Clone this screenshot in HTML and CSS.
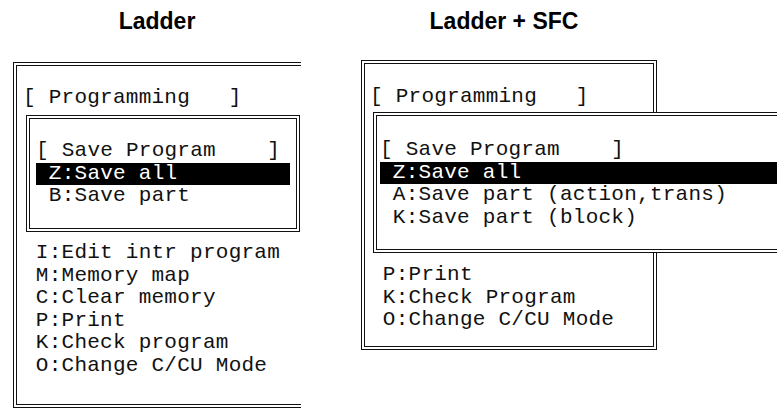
FILE: index.html
```html
<!DOCTYPE html>
<html lang="en">

<head>
    <meta charset="UTF-8">
    <meta name="viewport" content="width=device-width, initial-scale=1.0">
    <title>Programming - Save Program</title>
    <link rel="stylesheet" href="styles.css">
</head>

<body>
    <main class="page">
        <section class="col col-ladder">
            <h2 class="title">Ladder</h2>
            <div class="screen">
                <div class="frame">
                    <div class="line">[ Programming   ]</div>
                    <div class="popup">
                        <div class="line">[ Save Program    ]</div>
                        <div class="line sel"> Z:Save all</div>
                        <div class="line"> B:Save part</div>
                    </div>
                    <div class="line"> I:Edit intr program</div>
                    <div class="line"> M:Memory map</div>
                    <div class="line"> C:Clear memory</div>
                    <div class="line"> P:Print</div>
                    <div class="line"> K:Check program</div>
                    <div class="line"> O:Change C/CU Mode</div>
                </div>
            </div>
        </section>

        <section class="col col-sfc">
            <h2 class="title">Ladder + SFC</h2>
            <div class="screen">
                <div class="frame">
                    <div class="line">[ Programming   ]</div>
                    <div class="popup">
                        <div class="line">[ Save Program    ]</div>
                        <div class="line sel"> Z:Save all</div>
                        <div class="line"> A:Save part (action,trans)</div>
                        <div class="line"> K:Save part (block)</div>
                    </div>
                    <div class="line"> P:Print</div>
                    <div class="line"> K:Check Program</div>
                    <div class="line"> O:Change C/CU Mode</div>
                </div>
            </div>
        </section>
    </main>
</body>

</html>
```

FILE: styles.css
```css
* {
    padding: 0;
    margin: 0;
    box-sizing: border-box;
}

html,
body {
    overflow: hidden;
}

body {
    background: #fff;
    color: #000;
    width: 777px;
    height: 410px;
}

.page {
    display: flex;
    gap: 60px;
    padding: 8px 0 0 13px;
}

.col-ladder {
    width: 288px;
    flex: none;
}

.col-sfc {
    flex: 1;
    min-width: 0;
}

.title {
    font-family: "Liberation Sans", Arial, sans-serif;
    font-weight: bold;
    font-size: 23px;
    line-height: 27px;
    text-align: center;
}

.col-ladder .title {
    margin-bottom: 27px;
}

.col-sfc .title {
    width: 296px;
    padding-right: 10px;
    margin-bottom: 25px;
}

.screen {
    overflow: hidden;
}

.col-ladder .screen {
    width: 288px;
}

.frame {
    border: 4px double #111;
    font-family: "Liberation Mono", "DejaVu Sans Mono", monospace;
    font-size: 21px;
    letter-spacing: 0.25px;
    color: #111;
}

.line {
    white-space: pre;
    line-height: 22.5px;
    height: 22.5px;
}

.sel {
    background: #000;
    color: #fff;
}

.popup {
    border: 4px double #111;
    background: #fff;
}

/* left capture: frame runs past the crop */
.col-ladder .frame {
    width: 340px;
    padding: 21px 0 27px 6px;
}

.col-ladder .popup {
    width: 274px;
    margin: 5.5px 0 10.5px 3px;
    padding: 21px 6px 20px;
}

/* right capture: popup runs past the crop */
.col-sfc .frame {
    width: 296px;
    padding: 22px 0 14.5px 5px;
}

.col-sfc .popup {
    width: 440px;
    margin: 3.5px 0 11px 3px;
    padding: 23px 3px 20px;
}
```
